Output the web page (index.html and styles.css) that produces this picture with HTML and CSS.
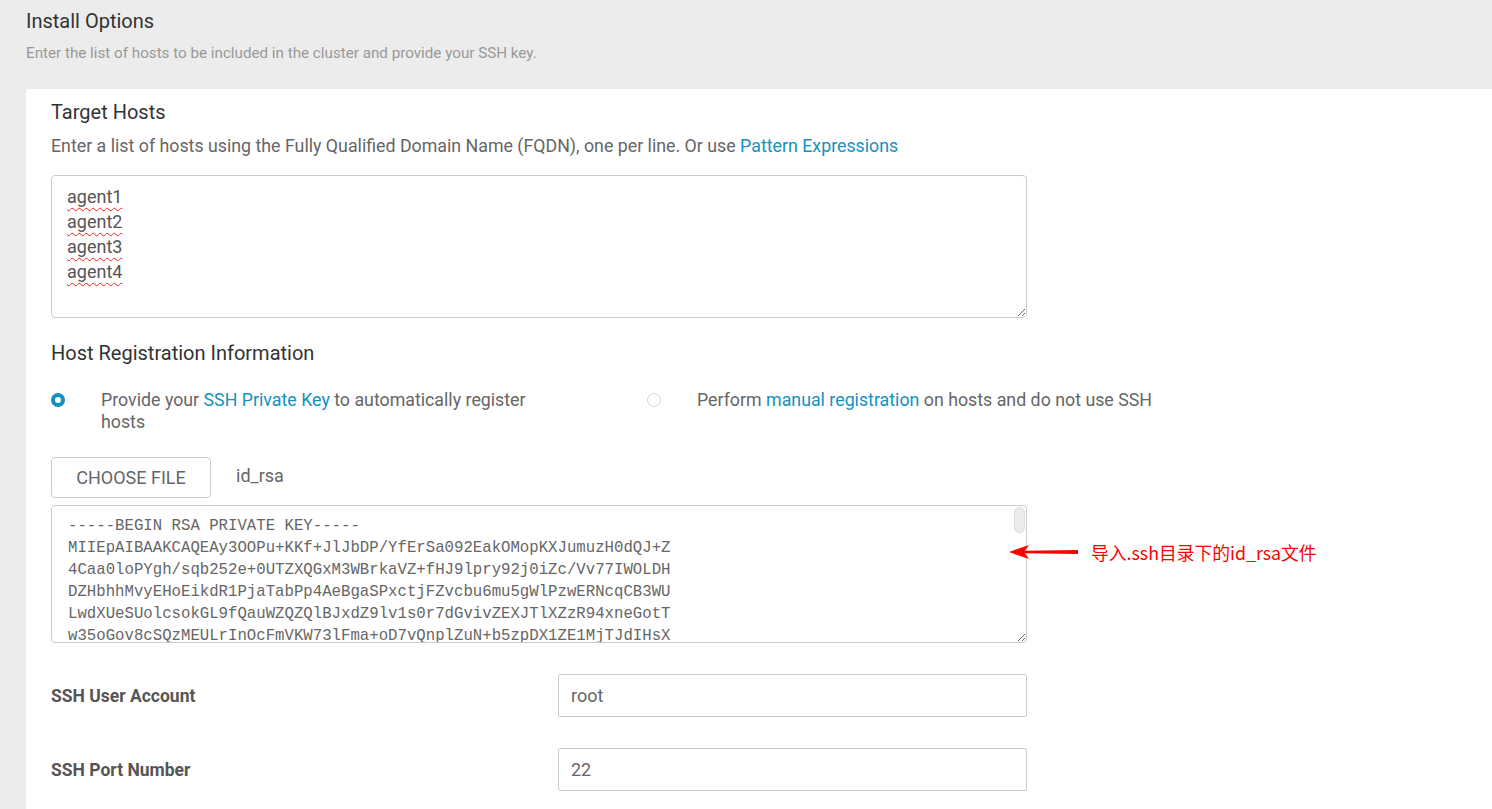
FILE: index.html
```html
<!DOCTYPE html>
<html lang="en">
<head>
<meta charset="utf-8">
<title>Install Options</title>
<link rel="stylesheet" href="styles.css">
</head>
<body>
<div class="page">
  <header class="page-head">
    <h1 class="page-title">Install Options</h1>
    <p class="page-sub">Enter the list of hosts to be included in the cluster and provide your SSH key.</p>
  </header>
  <main class="panel">
    <h2 class="section-title">Target Hosts</h2>
    <p class="section-desc">Enter a list of hosts using the Fully Qualified Domain Name (FQDN), one per line. Or use <a class="link" href="#">Pattern Expressions</a></p>
    <div class="hosts-box">
      <div class="host-line"><span class="spell">agent1</span></div>
      <div class="host-line"><span class="spell">agent2</span></div>
      <div class="host-line"><span class="spell">agent3</span></div>
      <div class="host-line"><span class="spell">agent4</span></div>
    </div>

    <h2 class="section-title reg-title">Host Registration Information</h2>
    <div class="radio-row">
      <label class="radio-opt">
        <span class="radio radio-on"></span>
        <span class="radio-text narrow">Provide your <a class="link" href="#">SSH Private Key</a> to automatically register hosts</span>
      </label>
      <label class="radio-opt">
        <span class="radio"></span>
        <span class="radio-text">Perform <a class="link" href="#">manual registration</a> on hosts and do not use SSH</span>
      </label>
    </div>

    <div class="file-row">
      <button class="file-btn" type="button">CHOOSE FILE</button>
      <span class="file-name">id_rsa</span>
    </div>

    <div class="key-wrap">
      <textarea class="key-box" readonly spellcheck="false">-----BEGIN RSA PRIVATE KEY-----
MIIEpAIBAAKCAQEAy3OOPu+KKf+JlJbDP/YfErSa092EakOMopKXJumuzH0dQJ+Z
4Caa0loPYgh/sqb252e+0UTZXQGxM3WBrkaVZ+fHJ9lpry92j0iZc/Vv77IWOLDH
DZHbhhMvyEHoEikdR1PjaTabPp4AeBgaSPxctjFZvcbu6mu5gWlPzwERNcqCB3WU
LwdXUeSUolcsokGL9fQauWZQZQlBJxdZ9lv1s0r7dGvivZEXJTlXZzR94xneGotT
w35oGov8cSQzMEULrInOcFmVKW73lFma+oD7vQnplZuN+b5zpDX1ZE1MjTJdIHsX
Kd0a8fT3ZpQe1mN9xWqLr7Yb2cVhU6gJ5sP0tR4uE8oA3iD</textarea>
      <span class="scroll-thumb" aria-hidden="true"></span>
      <div class="note">
        <svg class="note-arrow" width="72" height="20" viewBox="0 0 72 20" aria-hidden="true">
          <path d="M70 8 L16 8.8 L16 11.2 L70 12 Z" fill="#f00"/>
          <path d="M1 10 L21 3 L16 10 L21 17 Z" fill="#f00"/>
        </svg>
        <span class="note-text">导入.ssh目录下的id_rsa文件</span>
      </div>
    </div>

    <div class="form-row">
      <label class="form-label">SSH User Account</label>
      <input class="form-input" type="text" value="root">
    </div>
    <div class="form-row">
      <label class="form-label">SSH Port Number</label>
      <input class="form-input" type="text" value="22">
    </div>
  </main>
</div>
</body>
</html>
```
FILE: styles.css
```css
* { box-sizing: border-box; }
html, body { margin: 0; padding: 0; }
body {
  background: #ececec;
  font-family: Roboto, "Noto Sans", "Liberation Sans", sans-serif;
  color: #666;
  overflow: hidden;
  height: 809px;
}
.page { padding-left: 26px; }
.page-head { padding-top: 10px; }
.page-title {
  margin: 0;
  font-size: 20px;
  line-height: 22px;
  font-weight: 400;
  color: #333;
}
.page-sub {
  margin: 11px 0 0;
  font-size: 15.2px;
  line-height: 20px;
  color: #999;
}
.panel {
  margin-top: 26px;
  background: #fff;
  border-top-left-radius: 3px;
  padding: 12px 0 40px 25px;
  min-height: 740px;
}
.section-title {
  margin: 0;
  font-size: 20px;
  line-height: 22px;
  font-weight: 400;
  color: #333;
}
.section-desc {
  margin: 12px 0 0;
  font-size: 17.8px;
  line-height: 22px;
  color: #666;
}
.link { color: #1491c1; text-decoration: none; }
.hosts-box {
  margin-top: 18px;
  width: 976px;
  height: 143px;
  border: 1px solid #ccc;
  border-radius: 4px;
  padding: 8px 15px;
  font-size: 18px;
  line-height: 25px;
  color: #555;
  resize: both;
  overflow: hidden;
}
.spell {
  text-decoration: underline wavy #e22;
  text-decoration-thickness: 1px;
  text-underline-offset: 4px;
}
.reg-title { margin-top: 24px; }
.radio-row {
  margin-top: 25px;
  display: grid;
  grid-template-columns: 596px 1fr;
}
.radio-opt {
  display: flex;
  align-items: flex-start;
  font-size: 17.8px;
  line-height: 22px;
  color: #666;
}
.radio {
  flex: none;
  width: 14px;
  height: 14px;
  margin-top: 4px;
  margin-right: 36px;
  border-radius: 50%;
  border: 1px solid #d6d6d6;
  background: #fff;
}
.radio-on { border: 4px solid #1491c1; }
.radio-text.narrow { width: 445px; }
.file-row {
  margin-top: 24px;
  display: flex;
  align-items: center;
}
.file-btn {
  width: 160px;
  height: 41px;
  border: 1px solid #ccc;
  border-radius: 4px;
  background: #fff;
  font-family: Roboto, "Liberation Sans", sans-serif;
  font-size: 18px;
  color: #666;
  padding: 0;
}
.file-name {
  margin-left: 25px;
  margin-top: -4px;
  font-size: 18px;
  color: #666;
}
.key-wrap {
  position: relative;
  margin-top: 7px;
  width: 976px;
}
.key-box {
  display: block;
  width: 976px;
  height: 138px;
  border: 1px solid #ccc;
  border-radius: 4px;
  padding: 9px 16px 7px;
  font-family: "Liberation Mono", "Courier New", monospace;
  font-size: 15.7px;
  line-height: 22px;
  color: #666;
  resize: both;
  overflow: hidden;
  white-space: pre;
  outline: none;
}
.scroll-thumb {
  position: absolute;
  right: 2px;
  top: 2px;
  width: 11px;
  height: 26px;
  border-radius: 6px;
  background: #ececec;
  border: 1px solid #dcdcdc;
}
.note {
  position: absolute;
  left: 957px;
  top: 36px;
  display: flex;
  align-items: center;
  white-space: nowrap;
}
.note-arrow { display: block; }
.note-text {
  margin-left: 11px;
  font-family: "Noto Sans CJK SC", "Noto Sans", sans-serif;
  font-size: 17.8px;
  line-height: 22px;
  color: #f00;
}
.form-row {
  margin-top: 31px;
  display: grid;
  grid-template-columns: 507px 469px;
  align-items: center;
}
.form-label {
  font-size: 17.5px;
  font-weight: 700;
  color: #555;
}
.form-input {
  height: 43px;
  width: 469px;
  border: 1px solid #ccc;
  border-radius: 2px;
  padding: 0 12px;
  font-family: Roboto, "Liberation Sans", sans-serif;
  font-size: 18px;
  color: #666;
  outline: none;
}
```
